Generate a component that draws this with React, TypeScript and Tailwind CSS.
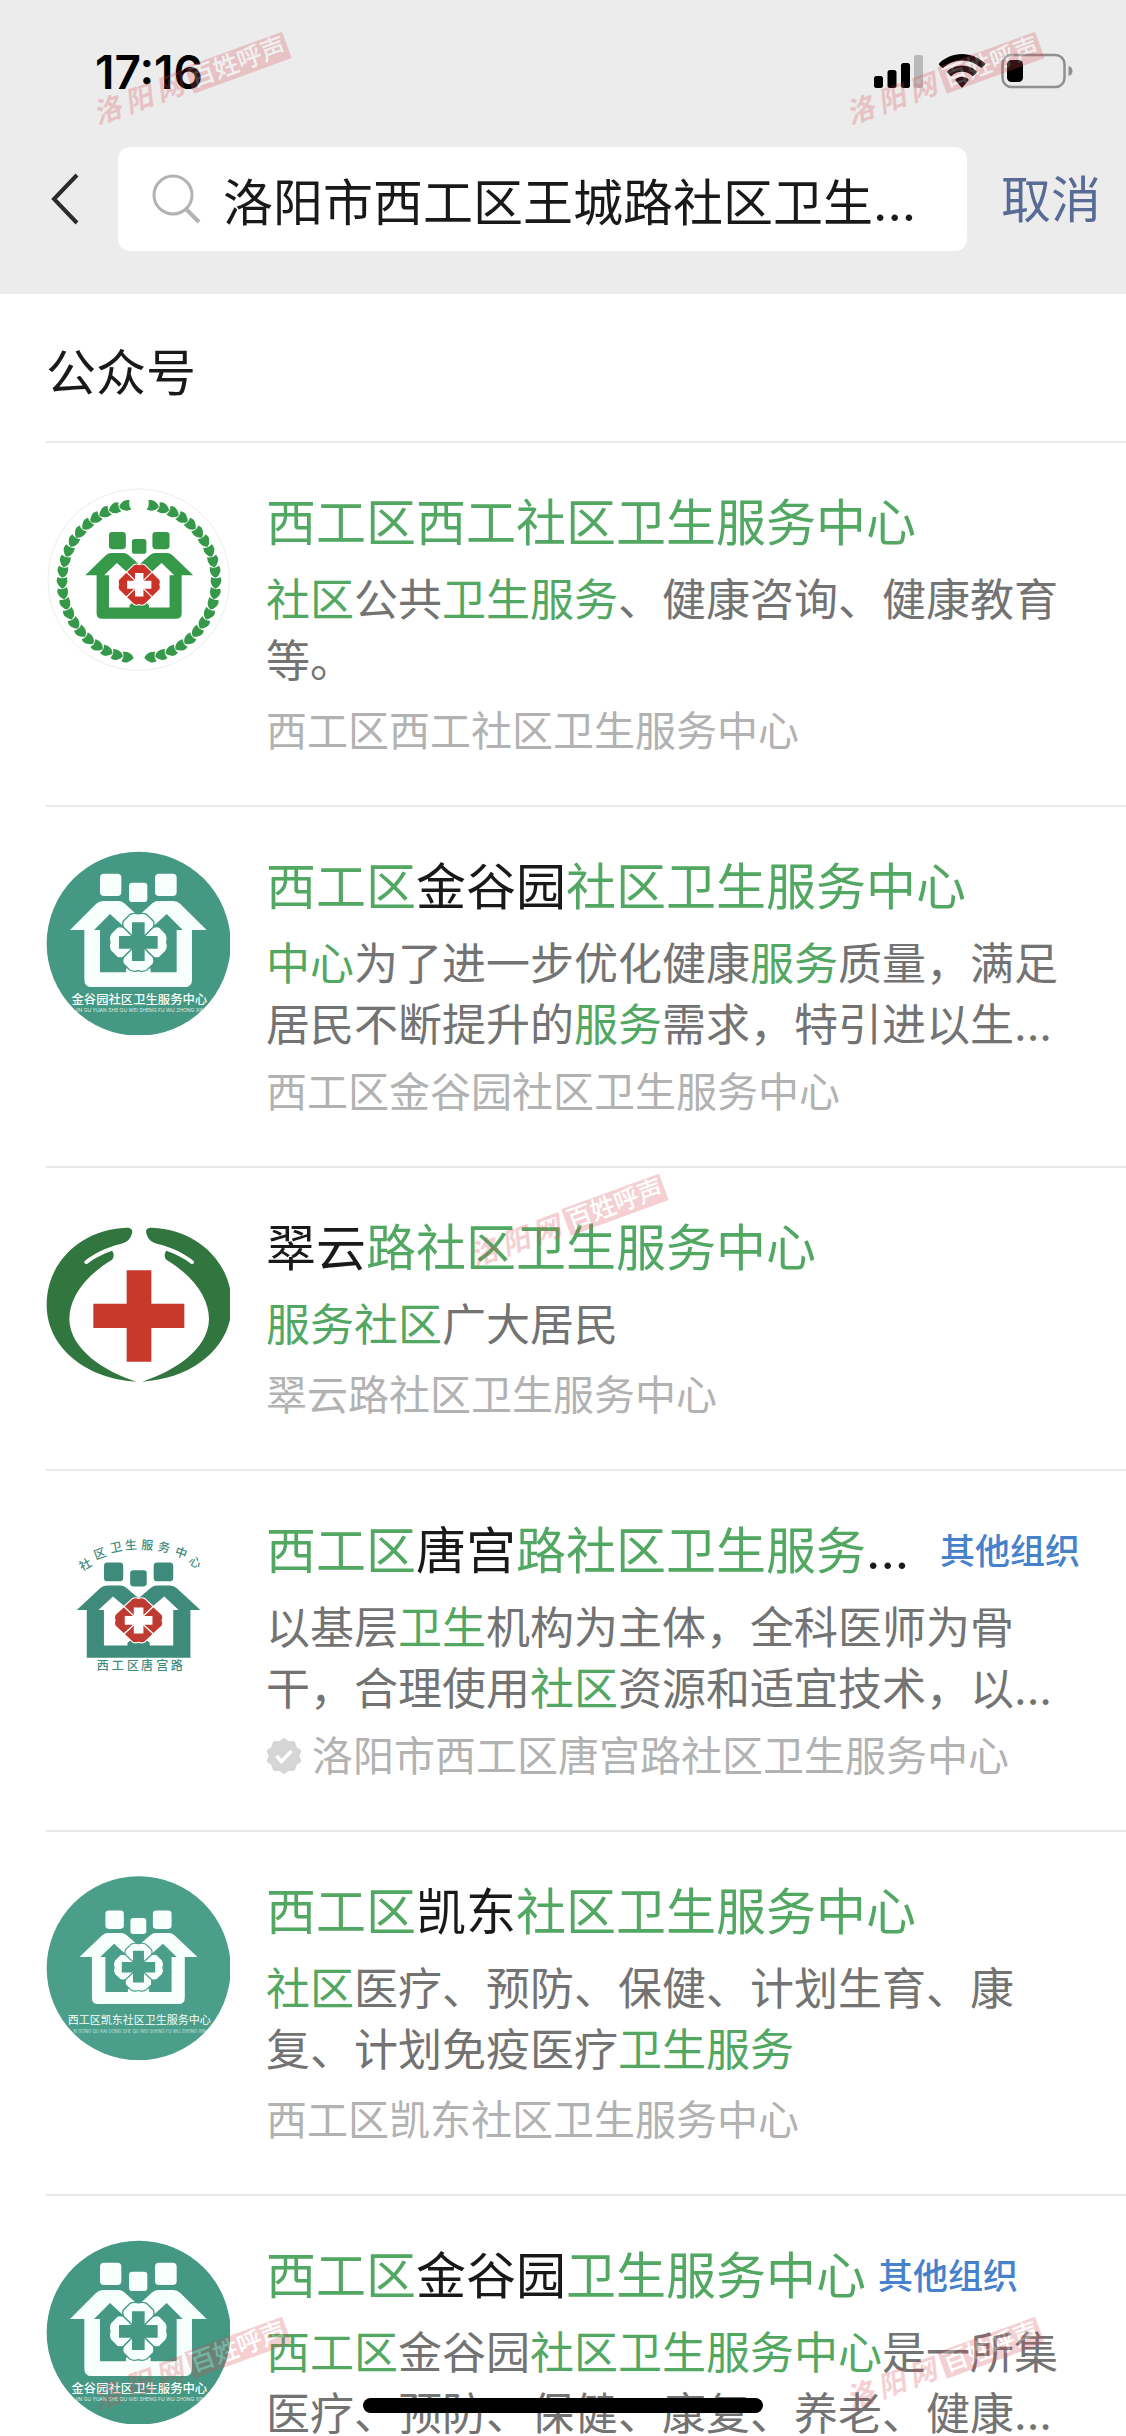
import type { ReactNode } from "react";
import clsx from "clsx";

type LogoName = "xigong" | "jinguyuan" | "cuiyun" | "tanggong" | "kaidong";

interface Account {
  id: number;
  logo: LogoName;
  // text between asterisks is highlighted
  title: string;
  desc: string;
  source?: string;
  tag?: string;
  verified?: boolean;
}

const accounts: Account[] = [
  {
    id: 1,
    logo: "xigong",
    title: "*西工区西工社区卫生服务中心*",
    desc: "*社区*公共*卫生服务*、健康咨询、健康教育等。",
    source: "西工区西工社区卫生服务中心",
  },
  {
    id: 2,
    logo: "jinguyuan",
    title: "*西工区*金谷园*社区卫生服务中心*",
    desc: "*中心*为了进一步优化健康*服务*质量，满足居民不断提升的*服务*需求，特引进以生...",
    source: "西工区金谷园社区卫生服务中心",
  },
  {
    id: 3,
    logo: "cuiyun",
    title: "翠云*路社区卫生服务中心*",
    desc: "*服务社区*广大居民",
    source: "翠云路社区卫生服务中心",
  },
  {
    id: 4,
    logo: "tanggong",
    title: "*西工区*唐宫*路社区卫生服务*...",
    desc: "以基层*卫生*机构为主体，全科医师为骨干，合理使用*社区*资源和适宜技术，以...",
    source: "洛阳市西工区唐宫路社区卫生服务中心",
    tag: "其他组织",
    verified: true,
  },
  {
    id: 5,
    logo: "kaidong",
    title: "*西工区*凯东*社区卫生服务中心*",
    desc: "*社区*医疗、预防、保健、计划生育、康复、计划免疫医疗*卫生服务*",
    source: "西工区凯东社区卫生服务中心",
  },
  {
    id: 6,
    logo: "jinguyuan",
    title: "*西工区*金谷园*卫生服务中心*",
    desc: "*西工区*金谷园*社区卫生服务中心*是一所集医疗、预防、保健、康复、养老、健康...",
    tag: "其他组织",
  },
];

function App() {
  return (
    <div className="relative h-screen overflow-hidden bg-white font-['Inter','Noto_Sans_CJK_SC',sans-serif] text-[#191919]">
      <header className="bg-[#ececec] pb-[43px]">
        <StatusBar />
        <SearchBar />
      </header>

      <main>
        <h1 className="px-[46px] pt-[44px] pb-[33px] text-[50px] leading-[70px]">
          公众号
        </h1>
        <ul className="pl-[46px]">
          {accounts.map((account) => (
            <AccountRow key={account.id} account={account} />
          ))}
        </ul>
      </main>

      <div className="absolute bottom-[23px] left-1/2 h-[15px] w-[400px] -translate-x-1/2 rounded-full bg-black" />

      <Watermark className="top-[66px] left-[88px]" />
      <Watermark className="top-[66px] right-[80px]" />
      <Watermark className="top-[calc(50%-10px)] left-[calc(50%-98px)]" />
      <Watermark className="bottom-[57px] left-[88px]" />
      <Watermark className="right-[80px] bottom-[57px]" />
    </div>
  );
}

export default App;

const StatusBar = () => {
  return (
    <div className="flex h-[147px] items-start justify-between pt-[42px] pr-[52px] pl-[95px]">
      <span className="text-[46px] leading-[60px] font-semibold text-black">
        17:16
      </span>
      <div className="flex items-center gap-4 pt-[11px]">
        <svg className="h-[34px] w-[49px]" viewBox="0 0 49 34">
          <rect x="0" y="22" width="9" height="12" rx="2.5" />
          <rect x="13.5" y="16" width="9" height="18" rx="2.5" />
          <rect x="27" y="9" width="9" height="25" rx="2.5" />
          <rect x="40" y="1" width="9" height="33" rx="2.5" fill="#b9b9b9" />
        </svg>
        <svg className="h-[34px] w-[46px]" viewBox="0 0 46 34">
          <path d="M23 0C14 0 6 3.600 0 9.400c-.4.400-.4 1 0 1.400l3 3c.4.400 1 .4 1.400 0C9.400 9.200 16 6.400 23 6.400s13.600 2.800 18.600 7.400c.4.400 1 .4 1.400 0l3-3c.4-.4.4-1 0-1.400C40 3.600 32 0 23 0z" />
          <path d="M23 11.500c-5.600 0-10.800 2.200-14.600 5.800-.4.400-.4 1 0 1.400l3 3c.4.400 1 .4 1.400 0 2.700-2.500 6.300-4 10.200-4s7.500 1.500 10.200 4c.4.400 1 .4 1.400 0l3-3c.4-.4.4-1 0-1.400-3.800-3.600-9-5.800-14.600-5.800z" />
          <path d="M23 22.800c-2.500 0-4.700.900-6.400 2.400-.4.400-.4 1 0 1.400l5.700 6.600c.4.500 1 .5 1.400 0l5.700-6.600c.4-.4.4-1 0-1.400-1.700-1.500-3.900-2.400-6.400-2.400z" />
        </svg>
        <svg className="h-[36px] w-[73px]" viewBox="0 0 73 36">
          <rect
            x="1.500"
            y="2"
            width="62"
            height="32"
            rx="9"
            fill="none"
            stroke="#8f8f8f"
            strokeWidth="2.500"
          />
          <rect x="6" y="7" width="16" height="22" rx="4.500" />
          <path d="M67.500 13c3 .8 4 2.900 4 5s-1 4.200-4 5z" fill="#8f8f8f" />
        </svg>
      </div>
    </div>
  );
};

const SearchBar = () => {
  return (
    <div className="flex items-center">
      <button
        type="button"
        aria-label="返回"
        className="flex h-[104px] w-[118px] items-center pl-[50px]"
      >
        <svg className="h-[54px] w-[30px]" viewBox="0 0 30 54" fill="none">
          <path d="M27 3 4 27l23 24" stroke="#2b2b2b" strokeWidth="4" />
        </svg>
      </button>
      <label className="flex h-[104px] min-w-0 flex-1 items-center rounded-[12px] bg-white pr-[36px] pl-[34px]">
        <svg
          className="h-[50px] w-[50px] shrink-0"
          viewBox="0 0 50 50"
          fill="none"
          stroke="#b3b3b3"
          strokeWidth="3"
        >
          <circle cx="21" cy="21" r="19" />
          <path d="m34 35 13 13" strokeWidth="4" />
        </svg>
        <input
          type="text"
          aria-label="搜索"
          defaultValue="洛阳市西工区王城路社区卫生..."
          className="ml-[21px] h-[80px] w-full min-w-0 bg-transparent text-[50px] leading-[70px] outline-none"
        />
      </label>
      <button
        type="button"
        className="shrink-0 pt-[2px] pr-[25px] pl-[34px] text-[50px] leading-[70px] text-[#576b95]"
      >
        取消
      </button>
    </div>
  );
};

const Highlight = ({ text }: { text: string }) => {
  return (
    <>
      {text.split("*").map((part, index) =>
        index % 2 === 1 ? (
          <em key={index} className="text-[#52a862] not-italic">
            {part}
          </em>
        ) : (
          part
        )
      )}
    </>
  );
};

const AccountRow = ({ account }: { account: Account }) => {
  const { logo, title, desc, source, tag, verified } = account;
  const clamped = desc.endsWith("...");

  return (
    <li className="flex gap-[36px] border-t-2 border-[#e8e8e8] pt-[44px] pr-[46px] pb-[45px]">
      <Logo name={logo} />
      <div className="min-w-0 flex-1 pt-px">
        <div className="flex items-center">
          <h2
            className={clsx(
              "text-[50px] leading-[70px] whitespace-nowrap",
              title.endsWith("...") && "grow"
            )}
          >
            <Highlight text={title} />
          </h2>
          {tag && (
            <span className="ml-[12px] text-[35px] leading-[50px] font-medium whitespace-nowrap text-[#4682cb]">
              {tag}
            </span>
          )}
        </div>
        <p className="mt-[12px] text-[44px] leading-[61px] text-[#737373]">
          <Highlight text={desc} />
        </p>
        {source && (
          <p
            className={clsx(
              "flex items-center text-[41px] leading-[58px] text-[#b2b2b2]",
              clamped ? "mt-[7px]" : "mt-[10px]"
            )}
          >
            {verified && <VerifiedBadge />}
            {source}
          </p>
        )}
      </div>
    </li>
  );
};

const VerifiedBadge = () => {
  return (
    <svg className="mr-[10px] h-[36px] w-[36px] shrink-0" viewBox="-18 -18 36 36">
      <g fill="#d6d6d6" stroke="#d6d6d6" strokeWidth="3" strokeLinejoin="round">
        <path d="M0-16.500 4.300-13.200 9.700-13.400 11.200-8.200 15.700-5.100 13.800 0 15.700 5.100 11.200 8.200 9.700 13.400 4.300 13.200 0 16.500-4.300 13.200-9.700 13.400-11.200 8.200-15.700 5.100-13.800 0-15.700-5.100-11.200-8.200-9.700-13.400-4.300-13.200z" />
      </g>
      <path d="m-7.500 0 5 5.500L7.500-5" fill="none" stroke="#fff" strokeWidth="3.500" />
    </svg>
  );
};

const Watermark = ({ className }: { className: string }) => {
  return (
    <div
      aria-hidden="true"
      className={clsx(
        "pointer-events-none absolute flex h-[28px] w-[205px] -rotate-[20deg] items-center justify-between opacity-25 select-none",
        className
      )}
    >
      <span className="flex gap-[5px] text-[28px] leading-[28px] font-bold text-[#d8474f] italic">
        <span>洛</span>
        <span>阳</span>
        <span>网</span>
      </span>
      <span className="h-[28px] bg-[#d8474f] px-[2px] text-[25px] leading-[27px] font-medium text-white">
        百姓呼声
      </span>
    </div>
  );
};

/* ---- logos ---- */

interface HouseProps {
  color: string;
  background: string;
  petal: string;
  cross: string;
  square?: boolean;
  // straight-edged petals around a slimmer cross
  diamond?: boolean;
}

const House = ({
  color,
  background,
  petal,
  cross,
  square,
  diamond,
}: HouseProps) => {
  return (
    <>
      <g fill={color}>
        <rect x="210" y="101" width="64" height="67" rx="12" />
        <rect x="297" y="128" width="55" height="58" rx="10" />
        <rect x="375" y="101" width="65" height="67" rx="12" />
        <path
          d={
            square
              ? "M120 270 198 192Q207 183 220 183H265Q275 183 283 190L325 228 367 190Q375 183 385 183H430Q442 183 451 192L530 270H497V441H153V270z"
              : "M120 270 198 192Q207 183 220 183H265Q275 183 283 190L325 228 367 190Q375 183 385 183H430Q442 183 451 192L530 270H486V419Q486 441 464 441H185Q163 441 163 419V270z"
          }
        />
      </g>
      <path
        fill={background}
        d="M192 270 240 222 290 268 288 397H210V270zM458 270 410 222 360 268 362 397H440V270zM288 300h74v88l-12-12h-50l-12 12z"
      />
      <g fill={petal} stroke={background} strokeWidth="4">
        {[0, 90, 180, 270].map((angle) => (
          <path
            key={angle}
            transform={`rotate(${angle} 325 307)`}
            d={
              diamond
                ? "M305 229Q315 224 325 229 335 224 345 229L374 258 325 307 276 258z"
                : "M299 224Q312 217 325 222 338 217 351 224L370 243Q374 250 370 262L325 307 280 262Q276 250 280 243z"
            }
          />
        ))}
      </g>
      <path
        fill={cross}
        d={
          diamond
            ? "M309 261h32v31h30v31h-30v31h-32v-31h-30v-31h30z"
            : "M306 247h38v41h39v38h-39v37h-38v-37h-39v-38h39z"
        }
      />
    </>
  );
};

const LogoFrame = ({
  viewBox,
  label,
  children,
}: {
  viewBox: string;
  label: string;
  children: ReactNode;
}) => {
  return (
    <svg
      role="img"
      aria-label={label}
      className="h-[184px] w-[184px] shrink-0"
      viewBox={viewBox}
    >
      {children}
    </svg>
  );
};

const leaves = [...Array(21)].map((_, index) => 10 + index * 8.05);

const Logo = ({ name }: { name: LogoName }) => {
  if (name === "xigong") {
    return (
      <LogoFrame viewBox="48 48 552 552" label="西工社区">
        <circle cx="326" cy="326" r="272" fill="#fff" stroke="#ededed" strokeWidth="3" />
        {[1, -1].map((side) => (
          <g
            key={side}
            transform={`translate(327 331) scale(${side} 1)`}
            fill="#36994a"
          >
            {leaves.map((angle) => (
              <path
                key={angle}
                transform={`rotate(${angle}) translate(0 -231)`}
                d="M-15-13Q-4-19 6-13 17-7 20 1 14 14-2 16L-15 15Q-7 1-15-13z"
              />
            ))}
          </g>
        ))}
        <g transform="translate(71 106) scale(.79 .765)">
          <House
            color="#36994a"
            background="#fff"
            petal="#cc3328"
            cross="#fff"
            diamond
          />
        </g>
      </LogoFrame>
    );
  }

  if (name === "cuiyun") {
    const hand =
      "M318 515C165 506 50 410 50 285 50 150 160 58 288 53 304 52 309 60 306 70 301 90 290 97 272 102 230 112 193 130 165 152 160 158 165 164 172 161 196 143 219 131 246 122 253 130 252 143 246 149 155 205 118 270 118 328 120 420 225 485 318 515z";
    return (
      <LogoFrame viewBox="48 6 552 552" label="翠云路社区">
        <g fill="#31753f">
          <path d={hand} />
          <path d={hand} transform="translate(655 0) scale(-1 1)" />
        </g>
        <path fill="#c8382b" d="M290 181h74v100h99v73h-99v101h-74V354H190v-73h100z" />
      </LogoFrame>
    );
  }

  if (name === "tanggong") {
    return (
      <LogoFrame viewBox="48 15 552 552" label="唐宫路社区">
        <g transform="translate(32 73) scale(.904 .84)">
          <House
            color="#3f8b7b"
            background="#fff"
            petal="#bf3a30"
            cross="#fff"
            square
            diamond
          />
        </g>
        <g fill="#3f8b7b" fontSize="36" fontWeight="500">
          <text
            x="157 197 243 286 333 382 432 473"
            y="184 149 128 119 117 121 134 159"
            rotate="-30 -20 -12 -4 4 12 20 30"
          >
            社区卫生服务中心
          </text>
          <text x="200 245 291 333 379 422" y="480">
            西工区唐宫路
          </text>
        </g>
      </LogoFrame>
    );
  }

  if (name === "kaidong") {
    return (
      <LogoFrame viewBox="48 48 552 552" label="凯东社区">
        <circle cx="326" cy="325" r="276" fill="#4a9e8a" />
        <g transform="translate(45 68) scale(.863 .826)">
          <House color="#f7fffd" background="#4a9e8a" petal="#f7fffd" cross="#4a9e8a" />
        </g>
        <g fill="#f7fffd" textAnchor="middle">
          <text x="328" y="492" fontSize="33">
            西工区凯东社区卫生服务中心
          </text>
          <text x="328" y="520" fontSize="13" opacity=".7">
            XI GONG QU KAI DONG SHE QU WEI SHENG FU WU ZHONG XIN
          </text>
        </g>
      </LogoFrame>
    );
  }

  return (
    <LogoFrame viewBox="48 33 552 552" label="金谷园社区">
      <circle cx="326" cy="311" r="276" fill="#459884" />
      <House color="#f7fffd" background="#459884" petal="#f7fffd" cross="#459884" />
      <g fill="#f7fffd" textAnchor="middle">
        <text x="328" y="492" fontSize="37" fontWeight="500">
          金谷园社区卫生服务中心
        </text>
        <text x="328" y="515" fontSize="15" opacity=".8">
          JIN GU YUAN SHE QU WEI SHENG FU WU ZHONG XIN
        </text>
      </g>
    </LogoFrame>
  );
};
